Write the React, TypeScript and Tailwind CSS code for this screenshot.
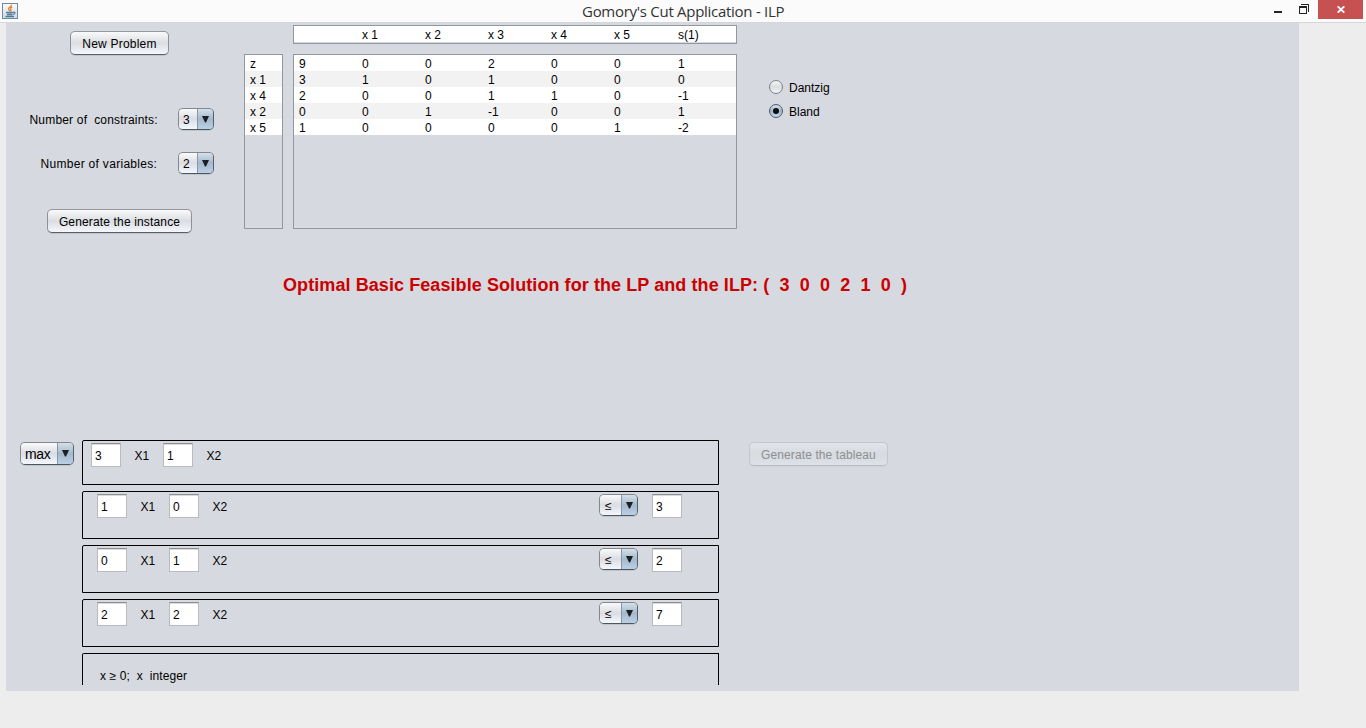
import React from "react";

const rowNames = ["z", "x 1", "x 4", "x 2", "x 5"];
const headings = ["", "x 1", "x 2", "x 3", "x 4", "x 5", "s(1)"];
const tableau = [
  [9, 0, 0, 2, 0, 0, 1],
  [3, 1, 0, 1, 0, 0, 0],
  [2, 0, 0, 1, 1, 0, -1],
  [0, 0, 1, -1, 0, 0, 1],
  [1, 0, 0, 0, 0, 1, -2],
];
const constraints = [
  { a: 1, b: 0, rhs: 3 },
  { a: 0, b: 1, rhs: 2 },
  { a: 2, b: 2, rhs: 7 },
];

function JavaIcon() {
  return (
    <svg width="16" height="16" viewBox="0 0 16 16" fill="none">
      <defs>
        <linearGradient id="java-bg" x1="0" y1="0" x2="0" y2="1">
          <stop offset="0" stopColor="#fbfbfb" />
          <stop offset="1" stopColor="#cfd8df" />
        </linearGradient>
      </defs>
      <rect x="0.5" y="0.5" width="15" height="15" fill="url(#java-bg)" stroke="#6c8ba3" />
      <path d="M9.6 1.8C9.8 3.6 6.3 4.4 6.5 6C6.6 6.8 7.6 7.2 7.7 8.2M10.3 4.2C8.6 4.8 8 5.6 8.8 6.6C9.2 7.2 8.8 7.8 8.4 8.2" stroke="#e8812c" strokeWidth="1.3" />
      <path d="M4 9.5H11M5 11.5H10.5M3.5 13.5H12" stroke="#4b7a9b" strokeWidth="1.3" />
      <path d="M11 9.3C13.6 8.6 13.8 10.6 11.2 11.6" stroke="#4b7a9b" strokeWidth="1.1" />
    </svg>
  );
}

function Button({ children, className = "", disabled = false }: { children: React.ReactNode; className?: string; disabled?: boolean }) {
  const look = disabled
    ? "border-[#c3c6cb] border-b-[#b9bcc2] bg-linear-to-b from-[#e1e4e8] via-[#d7dae0] to-[#dde1e8] text-[#8e8f91] shadow-[0_1px_0_#cfd2d8]"
    : "border-[#8d9096] border-t-[#95979d] border-b-[#5b5e64] bg-linear-to-b from-[#fafafb] via-[#dbdde2] to-[#f4f7fd] text-black shadow-[0_1px_0_#c2c5cc]";
  return (
    <button className={`flex h-6 shrink-0 items-center justify-center rounded-[5px] border pt-px whitespace-pre ${look} ${className}`}>
      {children}
    </button>
  );
}

function Combo({ value, className = "", valueClass = "" }: { value: string; className?: string; valueClass?: string }) {
  return (
    <div className={`flex shrink-0 overflow-hidden rounded-[5px] border border-[#84878d] border-r-[#52616f] border-b-[#4d565f] shadow-[0_1px_0_#c0c4cb] ${className}`}>
      <div className={`flex grow items-center bg-linear-to-b from-[#fafafb] via-[#dbdde2] to-[#f4f7fd] pl-1 ${valueClass}`}>{value}</div>
      <div className="flex w-4 shrink-0 justify-center border-l border-[#8398a9] bg-linear-to-b from-[#d5e0e9] via-[#a5b9cb] to-[#bad0e6] pt-[7px]">
        <svg width="7" height="7" viewBox="0 0 7 7"><path d="M0 0H7L4 6.5H3Z" fill="#1b1e22" /></svg>
      </div>
    </div>
  );
}

function Field({ value }: { value: number }) {
  return (
    <div className="flex h-6 w-[30px] shrink-0 items-center border border-[#b8babd] border-t-[#8d8e91] bg-white pt-px pl-[3px] shadow-[inset_0_1px_0_#d9dadc]">
      {value}
    </div>
  );
}

function Terms({ a, b }: { a: number; b: number }) {
  return (
    <>
      <Field value={a} />
      <span className="w-[42px] pt-px pl-[13.5px]">X1</span>
      <Field value={b} />
      <span className="pt-px pl-[13.5px]">X2</span>
    </>
  );
}

function Radio({ label, checked = false }: { label: string; checked?: boolean }) {
  return (
    <label className="flex h-6 items-center">
      <svg width="16" height="16" viewBox="0 0 16 16">
        <defs>
          <linearGradient id={`radio-${label}`} x1="0" y1="0" x2="0" y2="1">
            <stop offset="0" stopColor={checked ? "#dce8f2" : "#fafafa"} />
            <stop offset="0.5" stopColor={checked ? "#9fb5c8" : "#dbdde1"} />
            <stop offset="1" stopColor={checked ? "#c4dcf3" : "#f6f8fc"} />
          </linearGradient>
        </defs>
        <circle cx="8" cy="8" r="6.5" fill={`url(#radio-${label})`} stroke={checked ? "#4b5a68" : "#7c7f84"} />
        {checked && <circle cx="8" cy="8" r="3" fill="#0c0e10" />}
      </svg>
      <span className="pt-px pl-[5px]">{label}</span>
    </label>
  );
}

function TitleBar() {
  return (
    <header className="flex h-[23px] items-start border-b border-[#d5d6d8] bg-[#fbfbfb]">
      <div className="w-[582px] pt-[3px] pl-0.5"><JavaIcon /></div>
      <h1 className="w-[690px] text-[15px] leading-[23px] font-normal tracking-[-0.28px] whitespace-pre text-[#333] [font-family:'Open_Sans',sans-serif]">Gomory's Cut Application - ILP</h1>
      <svg width="46" height="20" viewBox="0 0 46 20" shapeRendering="crispEdges">
        <path d="M2 11H10V13H2ZM27 6H35V14H27ZM28 8V13H34V8ZM29 4H37V12H36V5H29Z" fill="#262626" fillRule="evenodd" />
      </svg>
      <div className="flex h-[19px] w-[45px] justify-center bg-[#c75050] pt-1.5">
        <svg width="8" height="7" viewBox="0 0 8 7"><path d="M0.7 0.3L7.3 6.7M7.3 0.3L0.7 6.7" stroke="white" strokeWidth="1.8" /></svg>
      </div>
    </header>
  );
}

export default function App() {
  return (
    <div className="h-[728px] w-[1366px] overflow-hidden bg-[#ededed] text-xs leading-4 text-black [font-family:'Liberation_Sans',Arial,sans-serif]">
      <TitleBar />
      <main className="ml-1.5 flex h-[668px] w-[1293px] flex-col bg-[#d6d9df]">
        <section className="flex h-[250px]">
          <div className="flex w-[238px] flex-col pt-2">
            <Button className="ml-16 w-[99px] tracking-[0.22px]">New Problem</Button>
            <div className="mt-[53px] flex h-[22px] items-center justify-between pr-[30px] pl-[23.5px]">
              <span className="pt-px tracking-[0.18px] whitespace-pre">Number of  constraints:</span>
              <Combo value="3" className="h-[22px] w-9" valueClass="pt-px" />
            </div>
            <div className="mt-[22px] flex h-[22px] items-center justify-between pr-[30px] pl-[34.5px]">
              <span className="pt-px tracking-[0.3px] whitespace-pre">Number of variables:</span>
              <Combo value="2" className="h-[22px] w-9" valueClass="pt-px" />
            </div>
            <Button className="mt-[35px] ml-[41px] w-[145px] tracking-[0.15px]">Generate the instance</Button>
          </div>
          <div className="mt-[31px] mr-2.5 h-[175px] w-[39px] border border-[#9297a1]">
            {rowNames.map((name) => (
              <div key={name} className="h-4 bg-white pt-px pl-[5px] even:bg-[#f2f2f2]">{name}</div>
            ))}
          </div>
          <div className="w-[444px] pt-0.5">
            <div className="flex h-[19px] border border-[#9297a1] bg-white pt-px pl-[5px] shadow-[inset_0_-1px_0_#d6d9df]">
              {headings.map((h, i) => (
                <span key={i} className={i === 6 ? "pl-px" : "w-[63px]"}>{h}</span>
              ))}
            </div>
            <div className="mt-2.5 h-[175px] border border-[#9297a1]">
              {tableau.map((row, r) => (
                <div key={r} className="flex h-4 bg-white pt-px pl-[5px] even:bg-[#f2f2f2]">
                  {row.map((v, c) => <span key={c} className="w-[63px] shrink-0 last:w-auto last:pl-px">{v}</span>)}
                </div>
              ))}
            </div>
          </div>
          <div className="pt-[52px] pl-[31px]">
            <Radio label="Dantzig" />
            <Radio label="Bland" checked />
          </div>
        </section>
        <p className="h-[167px] pl-[277px] text-lg leading-6 font-bold tracking-[0.08px] whitespace-pre text-[#cc0000]">Optimal Basic Feasible Solution for the LP and the ILP: (  3  0  0  2  1  0  )</p>
        <section className="flex h-[245px] items-start overflow-hidden">
          <Combo value="max" className="mt-0.5 mr-2 ml-3.5 h-[23px] w-[54px]" valueClass="text-sm leading-4 tracking-[-0.3px]" />
          <div className="flex w-[637px] flex-col gap-1.5">
            <div className="flex h-[45px] items-start rounded-tl-[2px] border border-black pt-0.5 pl-2 leading-6">
              <Terms a={3} b={1} />
            </div>
            {constraints.map((c) => (
              <div key={c.rhs} className="flex h-12 items-start rounded-tl-[2px] border border-black pt-0.5 pr-9 pl-3.5 leading-6">
                <Terms a={c.a} b={c.b} />
                <div className="grow" />
                <Combo value="≤" className="mr-3.5 h-[22px] w-[39px]" valueClass="pl-[5px] pt-px" />
                <Field value={c.rhs} />
              </div>
            ))}
            <div className="h-8 rounded-tl-[2px] border border-b-0 border-black pt-[14px] pl-[17px] tracking-[0.1px] whitespace-pre">x ≥ 0;  x  integer</div>
          </div>
          <Button disabled className="mt-0.5 ml-[30px] w-[139px] tracking-[0.1px]">Generate the tableau</Button>
        </section>
      </main>
    </div>
  );
}
